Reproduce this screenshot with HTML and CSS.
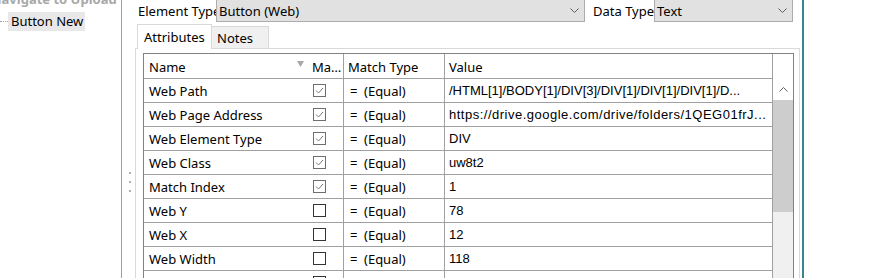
FILE: index.html
```html
<!DOCTYPE html>
<html>
<head>
<meta charset="utf-8">
<link rel="stylesheet" href="styles.css">
</head>
<body>
<div class="app">
  <div class="left">
    <div class="tree-parent">Navigate to Upload</div>
    <div class="tree-item"><span class="dots"></span><span class="sel">Button New</span></div>
  </div>
  <div class="splitter"><span></span><span></span><span></span></div>
  <div class="main">
    <div class="toprow">
      <div class="lbl lbl1">Element Type</div>
      <div class="combo combo1"><span>Button (Web)</span><svg class="chev" width="9" height="5" viewBox="0 0 9 5"><polyline points="0.5,0.5 4.5,4.5 8.5,0.5" fill="none" stroke="#606060" stroke-width="1"/></svg></div>
      <div class="lbl lbl2">Data Type</div>
      <div class="combo combo2"><span>Text</span><svg class="chev" width="9" height="5" viewBox="0 0 9 5"><polyline points="0.5,0.5 4.5,4.5 8.5,0.5" fill="none" stroke="#606060" stroke-width="1"/></svg></div>
    </div>
    <div class="tabs">
      <div class="tab active">Attributes</div>
      <div class="tab notes">Notes</div>
    </div>
    <div class="panel">
      <div class="grid">
        <div class="hdr">
          <div class="c c-name">Name</div>
          <div class="c c-ma"><svg class="tri" width="7" height="6" viewBox="0 0 7 6"><polygon points="0,0 7,0 3.5,6" fill="#a8a8a8"/></svg><span>Ma…</span></div>
          <div class="c c-mt">Match Type</div>
          <div class="c c-val">Value</div>
          <div class="c c-sp"></div>
        </div>
        <div class="body">
          <div class="rows">
            <div class="row"><div class="c c-name">Web Path</div><div class="c c-ma"><span class="cb on"><svg width="11" height="11" viewBox="0 0 11 11"><polyline points="2,5.5 4.5,8 9,3" fill="none" stroke="#7a7a7a" stroke-width="1"/></svg></span></div><div class="c c-mt"><span class="eq">=</span>(Equal)</div><div class="c c-val v">/HTML[1]/BODY[1]/DIV[3]/DIV[1]/DIV[1]/DIV[1]/D...</div></div>
            <div class="row"><div class="c c-name">Web Page Address</div><div class="c c-ma"><span class="cb on"><svg width="11" height="11" viewBox="0 0 11 11"><polyline points="2,5.5 4.5,8 9,3" fill="none" stroke="#7a7a7a" stroke-width="1"/></svg></span></div><div class="c c-mt"><span class="eq">=</span>(Equal)</div><div class="c c-val v url">https://drive.google.com/drive/folders/1QEG01frJ...</div></div>
            <div class="row"><div class="c c-name">Web Element Type</div><div class="c c-ma"><span class="cb on"><svg width="11" height="11" viewBox="0 0 11 11"><polyline points="2,5.5 4.5,8 9,3" fill="none" stroke="#7a7a7a" stroke-width="1"/></svg></span></div><div class="c c-mt"><span class="eq">=</span>(Equal)</div><div class="c c-val v">DIV</div></div>
            <div class="row"><div class="c c-name">Web Class</div><div class="c c-ma"><span class="cb on"><svg width="11" height="11" viewBox="0 0 11 11"><polyline points="2,5.5 4.5,8 9,3" fill="none" stroke="#7a7a7a" stroke-width="1"/></svg></span></div><div class="c c-mt"><span class="eq">=</span>(Equal)</div><div class="c c-val v">uw8t2</div></div>
            <div class="row"><div class="c c-name">Match Index</div><div class="c c-ma"><span class="cb on"><svg width="11" height="11" viewBox="0 0 11 11"><polyline points="2,5.5 4.5,8 9,3" fill="none" stroke="#7a7a7a" stroke-width="1"/></svg></span></div><div class="c c-mt"><span class="eq">=</span>(Equal)</div><div class="c c-val v">1</div></div>
            <div class="row"><div class="c c-name">Web Y</div><div class="c c-ma"><span class="cb"></span></div><div class="c c-mt"><span class="eq">=</span>(Equal)</div><div class="c c-val v">78</div></div>
            <div class="row"><div class="c c-name">Web X</div><div class="c c-ma"><span class="cb"></span></div><div class="c c-mt"><span class="eq">=</span>(Equal)</div><div class="c c-val v">12</div></div>
            <div class="row"><div class="c c-name">Web Width</div><div class="c c-ma"><span class="cb"></span></div><div class="c c-mt"><span class="eq">=</span>(Equal)</div><div class="c c-val v">118</div></div>
            <div class="row"><div class="c c-name">Web Height</div><div class="c c-ma"><span class="cb"></span></div><div class="c c-mt"><span class="eq">=</span>(Equal)</div><div class="c c-val v">36</div></div>
          </div>
          <div class="vscroll">
            <div class="up"><svg width="9" height="5" viewBox="0 0 9 5"><polyline points="0.5,4.5 4.5,0.5 8.5,4.5" fill="none" stroke="#606060" stroke-width="1"/></svg></div>
            <div class="thumb"></div>
            <div class="track"></div>
          </div>
        </div>
      </div>
    </div>
  </div>
  <div class="edge"></div>
</div>
</body>
</html>
```

FILE: styles.css
```css
html, body {
  margin: 0;
  padding: 0;
  background: #fff;
}
body {
  width: 870px;
  height: 278px;
  overflow: hidden;
  font-family: "Noto Sans", sans-serif;
  font-size: 13px;
  color: #000;
}
.app {
  display: flex;
  height: 278px;
}
.left {
  width: 121px;
  flex: none;
  border-right: 1px solid #a0a0a0;
  overflow: hidden;
}
.tree-parent {
  margin-top: -10px;
  margin-left: -9px;
  height: 22px;
  line-height: 18px;
  font-weight: bold;
  color: #a8a8a8;
  white-space: nowrap;
}
.tree-item {
  display: flex;
  align-items: center;
}
.dots {
  width: 8px;
  border-top: 1px dotted #a0a0a0;
}
.sel {
  background: #e8e8e8;
  line-height: 17px;
  padding: 1px 2px 1px 3px;
  white-space: nowrap;
}
.splitter {
  width: 13px;
  flex: none;
  display: flex;
  flex-direction: column;
  padding-top: 172px;
  box-sizing: border-box;
  padding-left: 7px;
}
.splitter span {
  width: 2px;
  height: 2px;
  background: #b0b0b0;
  margin-bottom: 7px;
}
.main {
  width: 665px;
  flex: none;
  display: flex;
  flex-direction: column;
}
.toprow {
  display: flex;
  align-items: center;
  height: 23px;
  margin-top: -1px;
  padding-left: 3px;
}
.lbl {
  flex: none;
  overflow: hidden;
  white-space: nowrap;
}
.lbl1 { width: 78px; }
.lbl2 { width: 61px; margin-left: 8px; }
.combo {
  flex: none;
  box-sizing: border-box;
  height: 23px;
  border: 1px solid #adadad;
  background: #e1e1e1;
  display: flex;
  align-items: center;
  justify-content: space-between;
  padding: 0 5px 0 2px;
  white-space: nowrap;
}
.combo1 { width: 369px; }
.combo2 { width: 139px; }
.chev { display: block; }
.tabs {
  display: flex;
  align-items: flex-end;
  height: 26px;
  border-bottom: 1px solid #d9d9d9;
  padding-left: 2px;
}
.tab {
  box-sizing: border-box;
  display: flex;
  align-items: center;
  white-space: nowrap;
}
.tab.active {
  width: 75px;
  height: 25px;
  margin-bottom: -1px;
  background: #fff;
  border: 1px solid #d9d9d9;
  border-bottom: none;
  padding-left: 6px;
}
.tab.notes {
  width: 57px;
  height: 22px;
  background: #f0f0f0;
  border-top: 1px solid #d9d9d9;
  border-right: 1px solid #d9d9d9;
  padding-left: 5px;
  padding-top: 1px;
}
.panel {
  flex: 1;
  border-left: 1px solid #d9d9d9;
  border-right: 1px solid #d9d9d9;
  padding: 4px 5px 0 7px;
  overflow: hidden;
}
.grid {
  width: 651px;
  box-sizing: border-box;
  border: 1px solid #828282;
  border-bottom: none;
}
.hdr {
  display: flex;
  height: 25px;
}
.c {
  box-sizing: border-box;
  flex: none;
  display: flex;
  align-items: center;
  white-space: nowrap;
  overflow: hidden;
}
.hdr .c {
  border-bottom: 1px solid #a0a0a0;
  padding-top: 2px;
}
.c-name { width: 150px; padding-left: 5px; }
.c-ma { width: 50px; border-right: 1px solid #a0a0a0; }
.c-mt { width: 101px; border-right: 1px solid #a0a0a0; padding-left: 4px; }
.c-val { width: 328px; border-right: 1px solid #a0a0a0; padding-left: 4px; }
.hdr .c-sp { width: 20px; border-bottom: none; }
.hdr .c-ma { padding-left: 3px; }
.tri { margin-right: 8px; margin-top: -6px; flex: none; }
.body {
  display: flex;
}
.rows {
  width: 629px;
  flex: none;
  display: flex;
  flex-direction: column;
}
.row {
  display: flex;
  height: 24px;
  flex: none;
  border-bottom: 1px solid #a0a0a0;
  box-sizing: border-box;
}
.row .c-mt { padding-left: 6px; }
.eq { width: 14px; flex: none; }
.cb {
  box-sizing: border-box;
  width: 13px;
  height: 13px;
  margin-left: 19px;
  border: 1px solid #333;
  background: #fff;
  display: flex;
}
.cb.on { border-color: #6e6e6e; }
.cb svg { display: block; }
.v {
  font-family: "Liberation Sans", Arial, sans-serif;
  font-size: 13px;
}
.url { letter-spacing: 0.5px; }
.vscroll {
  width: 20px;
  flex: none;
  display: flex;
  flex-direction: column;
  height: 200px;
}
.up {
  height: 21px;
  display: flex;
  align-items: center;
  justify-content: center;
  background: #fff;
}
.thumb {
  height: 112px;
  background: #cdcdcd;
}
.track {
  flex: 1;
  background: #f0f0f0;
}
.edge {
  width: 2px;
  margin-left: 2px;
  background: #3a8493;
  flex: none;
}
```
